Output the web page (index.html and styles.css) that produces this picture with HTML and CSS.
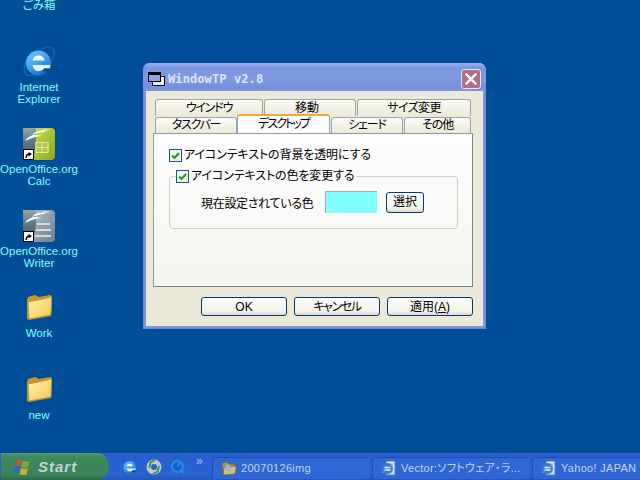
FILE: index.html
```html
<!DOCTYPE html>
<html lang="ja">
<head>
<meta charset="utf-8">
<title>WindowTP v2.8</title>
<link rel="stylesheet" href="styles.css">
</head>
<body>
<svg class="defs" width="0" height="0" aria-hidden="true">
  <defs>
    <linearGradient id="ieg" x1="0" y1="0" x2="0.600" y2="1"><stop offset="0" stop-color="#74c8f6"/><stop offset="0.600" stop-color="#3ca0ec"/><stop offset="1" stop-color="#1468c8"/></linearGradient>
    <linearGradient id="fold" x1="0" y1="0" x2="1" y2="1"><stop offset="0" stop-color="#fff4b0"/><stop offset="1" stop-color="#f0c850"/></linearGradient>
    <linearGradient id="calcg" x1="0" y1="0" x2="1" y2="1"><stop offset="0" stop-color="#c8dc50"/><stop offset="1" stop-color="#90a818"/></linearGradient>
    <linearGradient id="writeg" x1="0" y1="0" x2="1" y2="1"><stop offset="0" stop-color="#aebcc4"/><stop offset="1" stop-color="#6c8090"/></linearGradient>
    <linearGradient id="slate" x1="0" y1="0" x2="0" y2="1"><stop offset="0" stop-color="#98a4a4"/><stop offset="0.450" stop-color="#5c7884"/><stop offset="1" stop-color="#3c5c70"/></linearGradient>
    <symbol id="ie" viewBox="0 0 32 32">
      <path d="M4 13C1 20 0 27 4 29 9 31 19 26 25 20 31 14 33 6 30 2.500 27 0 22 1 18 3.500" fill="none" stroke="#1a64b0" stroke-width="1.300"/>
      <circle cx="15.500" cy="17" r="12.500" fill="url(#ieg)"/>
      <path d="M9.500 14.500C10 11 12.500 9.500 15.500 9.500S21 11 21.500 14.500z" fill="#f2fafe"/>
      <path d="M9.500 19H27.500L27 22.500H21C20 24 18 25 16 25 12.500 25 10 23 9.500 19z" fill="#e6f4fc"/>
      <path d="M21 22.500H28L25 27 20 25z" fill="#004e98"/>
    </symbol>
    <symbol id="iepage" viewBox="0 0 16 16">
      <path d="M5 1H14V15H5z" fill="#dfe6f4" stroke="#5878a8"/>
      <path d="M8 4h4M8 12h4" stroke="#8aa0c8"/>
      <circle cx="6.500" cy="8.500" r="5.500" fill="#2e7cdc"/>
      <path d="M3.500 7.500h6M3.500 10h6" stroke="#e8f2fc" stroke-width="1.400"/>
      <path d="M1 13 12 4" stroke="#c8a060" stroke-width="1"/>
    </symbol>
    <symbol id="openfolder" viewBox="0 0 16 16">
      <path d="M1 3 6 2 8 4 14 4V13L2 15z" fill="#a89458" stroke="#6c6038" stroke-width=".7"/>
      <path d="M3 7 15.500 6 14 14 2 15z" fill="#cfbd84" stroke="#6c6038" stroke-width=".7"/>
      <circle cx="7" cy="8" r="3" fill="#9cb4d4"/>
    </symbol>
    <symbol id="shortcut" viewBox="0 0 11 11">
      <rect width="11" height="11" fill="#000"/>
      <rect x="1" y="1" width="9" height="9" fill="#fff"/>
      <path d="M2.500 9C2.500 6 3.500 4.500 5.500 4.500V3L9 5 5.500 7.500V6C4.500 6 4 7 4 9z" fill="#000"/>
    </symbol>
    <symbol id="calc" viewBox="0 0 32 32">
      <path d="M0 0H26V32H0z" fill="url(#slate)"/>
      <path d="M13 0H29Q32 1 32 3V29Q32 31 29 32H9Q14 20 13 0z" fill="url(#calcg)"/>
      <path d="M12 14h14v11H12z" fill="#b4c84c"/>
      <path d="M13 14.500h12v10H13zM19 14.500v10M13 19.500h12" fill="none" stroke="#dce69c"/>
      <path d="M2 13C6 7 12 6 19 8 13 8 8 10 2 13zM9 7C13 2 19 2 23 4 18 4 14 5 9 7zM17 3.500C20 1 24 1 28 2 24 2 21 3 17 3.500z" fill="#fff"/>
      <use href="#shortcut" x="0" y="21" width="11" height="11"/>
    </symbol>
    <symbol id="writer" viewBox="0 0 32 32">
      <path d="M0 0H26V32H0z" fill="url(#slate)"/>
      <path d="M13 0H29Q32 1 32 3V29Q32 31 29 32H9Q14 20 13 0z" fill="url(#writeg)"/>
      <path d="M14 14h13M13 20h15M12 26h16" stroke="#d4dce0" stroke-width="2" fill="none"/>
      <path d="M2 13C6 7 12 6 19 8 13 8 8 10 2 13zM9 7C13 2 19 2 23 4 18 4 14 5 9 7zM17 3.500C20 1 24 1 28 2 24 2 21 3 17 3.500z" fill="#fff"/>
      <use href="#shortcut" x="0" y="21" width="11" height="11"/>
    </symbol>
    <symbol id="folder" viewBox="0 0 32 32">
      <path d="M4 8 5 5 12 3 16 5 27 3 29 4 28 24 6 28 4 27z" fill="#c89828"/>
      <path d="M5 10 15 8 28.500 5 28 23 6 27z" fill="url(#fold)" stroke="#b88c28" stroke-width=".8"/>
    </symbol>
  </defs>
</svg>

<main class="desktop">
  <ul class="icons">
    <li class="icon">
      <span class="icon-pic"></span>
      <span class="icon-label">ごみ箱</span>
    </li>
    <li class="icon">
      <svg class="icon-pic"><use href="#ie"/></svg>
      <span class="icon-label">Internet<br>Explorer</span>
    </li>
    <li class="icon">
      <svg class="icon-pic"><use href="#calc"/></svg>
      <span class="icon-label">OpenOffice.org<br>Calc</span>
    </li>
    <li class="icon">
      <svg class="icon-pic"><use href="#writer"/></svg>
      <span class="icon-label">OpenOffice.org<br>Writer</span>
    </li>
    <li class="icon">
      <svg class="icon-pic"><use href="#folder"/></svg>
      <span class="icon-label">Work</span>
    </li>
    <li class="icon">
      <svg class="icon-pic"><use href="#folder"/></svg>
      <span class="icon-label">new</span>
    </li>
  </ul>

  <section class="window">
    <header class="titlebar">
      <svg class="title-icon" width="17" height="14" viewBox="0 0 17 14">
        <rect x="4.500" y="4.500" width="12" height="9" fill="#e8ecf8" stroke="#000"/>
        <rect x="0.500" y="0.500" width="12" height="9" fill="#8ba4e4" stroke="#000"/>
        <rect x="1" y="1" width="11" height="2" fill="#000"/>
      </svg>
      <span class="title-text">WindowTP v2.8</span>
      <span class="close">
        <svg width="12" height="12" viewBox="0 0 12 12"><path d="M1.500 1.500 10.500 10.500M10.500 1.500 1.500 10.500" stroke="#fff" stroke-width="2.400" stroke-linecap="square"/></svg>
      </span>
    </header>
    <div class="body">
      <div class="tabs">
        <div class="tabrow">
          <span class="tab t1">ウインドウ</span>
          <span class="tab t2">移動</span>
          <span class="tab t3">サイズ変更</span>
        </div>
        <div class="tabrow lower">
          <span class="tab t4">タスクバー</span>
          <span class="tab t5 active">デスクトップ</span>
          <span class="tab t6">シェード</span>
          <span class="tab t7">その他</span>
        </div>
      </div>
      <div class="panel">
        <label class="check">
          <svg class="box" viewBox="0 0 13 13"><rect x=".5" y=".5" width="12" height="12" fill="#f4f4ee" stroke="#1c5180"/><path d="M3 6.500 5.500 9 10 4" fill="none" stroke="#21a121" stroke-width="2.200"/></svg>
          <span class="check-text">アイコンテキストの背景を透明にする</span>
        </label>
        <fieldset class="group">
          <legend class="check legend">
            <svg class="box" viewBox="0 0 13 13"><rect x=".5" y=".5" width="12" height="12" fill="#f4f4ee" stroke="#1c5180"/><path d="M3 6.500 5.500 9 10 4" fill="none" stroke="#21a121" stroke-width="2.200"/></svg>
            <span class="check-text">アイコンテキストの色を変更する</span>
          </legend>
          <div class="color-row">
            <span class="color-label">現在設定されている色</span>
            <span class="swatch"></span>
            <button class="btn pick" type="button">選択</button>
          </div>
        </fieldset>
      </div>
      <div class="actions">
        <button class="btn wide" type="button">OK</button>
        <button class="btn wide cancel" type="button">キャンセル</button>
        <button class="btn wide" type="button">適用(<u>A</u>)</button>
      </div>
    </div>
  </section>

  <footer class="taskbar">
    <div class="start">
      <svg class="logo" width="19" height="18" viewBox="0 0 19 18">
        <path d="M4 3C6 1 8 1 10 2L8 8C6 7 4 7 2 8z" fill="#c4553a"/>
        <path d="M11 2.500C13 4 16 4 18 3L16 9C14 10 11 10 9 8.500z" fill="#80a838"/>
        <path d="M2 9C4 8 6 8 8 9L6.500 15C4.500 14 2.500 14 0.500 15z" fill="#2c68cc"/>
        <path d="M9 10C11 11 14 11 16 10L14.500 16.500C12.500 17.500 9.500 17 7.500 16z" fill="#c8ac38"/>
      </svg>
      <span class="start-text">Start</span>
    </div>
    <div class="quick">
      <svg class="ql" width="16" height="16"><use href="#ie"/></svg>
      <svg class="ql" width="16" height="16" viewBox="0 0 16 16">
        <circle cx="8" cy="8" r="7.500" fill="#c4ccc8"/>
        <circle cx="8" cy="8" r="3" fill="#2a62c8"/>
        <path d="M3 9 4.500 3.500 9 1M13 7 11.500 12.500 7 15" stroke="#3a9a48" stroke-width="2" fill="none"/>
      </svg>
      <svg class="ql" width="16" height="16" viewBox="0 0 16 16">
        <circle cx="7.500" cy="7.500" r="5.500" fill="#1f58c8" stroke="#1c8ce0" stroke-width="2.400"/>
        <path d="M7.500 7.500 10 3M10 10 14 14" stroke="#1c8ce0" stroke-width="2"/>
      </svg>
      <span class="more">»</span>
    </div>
    <div class="tasks">
      <div class="task">
        <svg class="task-icon" width="16" height="16"><use href="#openfolder"/></svg>
        <span class="task-text">20070126img</span>
      </div>
      <div class="task">
        <svg class="task-icon" width="16" height="16"><use href="#iepage"/></svg>
        <span class="task-text">Vector:ソフトウェア・ラ...</span>
      </div>
      <div class="task">
        <svg class="task-icon" width="16" height="16"><use href="#iepage"/></svg>
        <span class="task-text">Yahoo! JAPAN</span>
      </div>
    </div>
  </footer>
</main>
</body>
</html>
```

FILE: styles.css
```css
* { box-sizing: border-box; }

html, body {
  margin: 0;
  padding: 0;
}

body {
  width: 640px;
  height: 480px;
  overflow: hidden;
  font-family: "Liberation Sans", "Noto Sans CJK JP", sans-serif;
  font-size: 12px;
  font-feature-settings: "palt";
  color: #000;
}

.defs { position: absolute; }

.desktop {
  position: relative;
  width: 640px;
  height: 480px;
  overflow: hidden;
  background: #004e98;
  display: flex;
  flex-direction: column;
  justify-content: flex-end;
}

/* Desktop icons */
.icons {
  position: absolute;
  left: 0;
  top: -36px;
  width: 78px;
  margin: 0;
  padding: 0;
  list-style: none;
  display: flex;
  flex-direction: column;
}

.icon {
  height: 82px;
  display: flex;
  flex-direction: column;
  align-items: center;
}

.icon-pic {
  display: block;
  width: 32px;
  height: 32px;
  flex: none;
}

.icon-label {
  margin-top: 3px;
  color: #7fffff;
  font-size: 11.500px;
  line-height: 12px;
  text-align: center;
  white-space: nowrap;
}

/* Window */
.window {
  position: absolute;
  left: 143px;
  top: 63px;
  width: 343px;
  height: 266px;
  display: flex;
  flex-direction: column;
  background: #7d95dd;
  border-radius: 7px 7px 0 0;
  padding: 0 3px 3px;
  box-shadow: inset 0 0 0 1px #6f88d4;
}

.titlebar {
  height: 28px;
  flex: none;
  display: flex;
  align-items: center;
  margin: 0 -3px;
  padding: 3px 5px 0 5px;
  border-radius: 7px 7px 0 0;
  background: linear-gradient(#9db0ea 0, #7a94df 5px, #7f99e2 16px, #7690db 24px, #7c96de 100%);
}

.title-icon { flex: none; }

.title-text {
  margin-left: 3px;
  font-family: "DejaVu Sans Mono", monospace;
  font-weight: bold;
  font-size: 12px;
  letter-spacing: 0.1px;
  color: #dde6fa;
  flex: 1;
}

.close {
  width: 20px;
  height: 20px;
  display: flex;
  align-items: center;
  justify-content: center;
  background: #b0707f;
  border: 1px solid #dfe4f6;
  border-radius: 3px;
}

.body {
  flex: 1;
  display: flex;
  flex-direction: column;
  background: #ece9d8;
  padding: 8px 10px 9px 7px;
}

/* Tabs */
.tabs { flex: none; }

.tabrow {
  display: flex;
  height: 17px;
}

.tabrow.lower { align-items: flex-end; }

.tab {
  height: 17px;
  display: flex;
  align-items: center;
  justify-content: center;
  margin-left: 2px;
  background: linear-gradient(#fbfbf7, #ece9d8);
  border: 1px solid #91a7b4;
  border-bottom: 0;
  border-radius: 3px 3px 0 0;
  line-height: 15px;
  white-space: nowrap;
}

.t1 { width: 108px; margin-left: 2px; letter-spacing: -1.200px; }
.t2 { width: 92px; margin-left: 1px; padding-right: 6px; }
.t3 { width: 114px; margin-left: 1px; letter-spacing: -0.600px; }
.t4 { width: 82px; height: 16px; margin-left: 2px; letter-spacing: -1.200px; }
.t5 { width: 93px; margin-left: 0; letter-spacing: -2px; }
.t6 { width: 72px; height: 16px; margin-left: 1px; letter-spacing: -1.200px; }
.t7 { width: 67px; height: 16px; margin-left: 1px; letter-spacing: -1px; }

.tab.active {
  height: 19px;
  margin-top: -3px;
  background: #fcfcfe;
  border-top: 2px solid #f0a838;
  border-bottom: 0;
  z-index: 1;
}

/* Panel */
.panel {
  flex: none;
  width: 320px;
  height: 154px;
  background: linear-gradient(#fdfdff, #f5f5f0);
  border: 1px solid #919b9c;
  border-right-color: #7a8488;
  border-bottom-color: #7a8488;
  padding: 15px 15px 0;
}

.check {
  display: flex;
  align-items: center;
  gap: 2px;
  height: 13px;
  line-height: 13px;
  white-space: nowrap;
}

.check-text { letter-spacing: -0.120px; }

.box {
  width: 13px;
  height: 13px;
  flex: none;
}

.group {
  width: 289px;
  height: 59px;
  margin: 8px 0 0;
  padding: 0;
  border: 1px solid #d0d0bf;
  border-radius: 4px;
  min-width: 0;
}

.legend {
  margin-left: 6px;
  padding: 0 2px 0 0;
}

.color-row {
  display: flex;
  align-items: center;
  height: 22px;
  margin-top: 8px;
  padding-left: 31px;
}

.color-label {
  width: 124px;
  letter-spacing: -0.300px;
  white-space: nowrap;
}

.swatch {
  width: 52px;
  height: 22px;
  background: #7fffff;
  border-top: 1px solid #a8a8a0;
  border-left: 1px solid #a8a8a0;
}

/* Buttons */
.btn {
  font-family: inherit;
  font-size: 12px;
  font-feature-settings: inherit;
  color: #000;
  padding: 0;
  background: linear-gradient(#fdfdfb, #f3f2ea 80%, #dcd8c8);
  border: 1px solid #003c74;
  border-radius: 3px;
  line-height: 14px;
}

.cancel { letter-spacing: -1.400px; }

.pick {
  width: 38px;
  height: 21px;
  margin-left: 9px;
}

.actions {
  display: flex;
  justify-content: flex-end;
  gap: 7px;
  margin-top: 10px;
}

.wide {
  width: 86px;
  height: 19px;
}

/* Taskbar */
.taskbar {
  height: 27px;
  flex: none;
  display: flex;
  align-items: stretch;
  background: linear-gradient(#2c60cc, #265fd0 3px, #2a62d2 20px, #2356bb);
  position: relative;
}

.start {
  width: 108px;
  flex: none;
  display: flex;
  align-items: center;
  padding: 0 0 0 11px;
  margin-left: 1px;
  gap: 7px;
  background: linear-gradient(#5a9a70, #3e8a5c 4px, #3a8258 22px, #2c6c48);
  border-radius: 0 12px 12px 0 / 0 14px 14px 0;
}

.logo { flex: none; }

.start-text {
  font-family: "Liberation Sans", sans-serif;
  font-style: italic;
  font-weight: bold;
  font-size: 15px;
  letter-spacing: 1px;
  color: #c3d3da;
}

.quick {
  width: 103px;
  flex: none;
  display: flex;
  align-items: center;
  gap: 8px;
  padding-left: 13px;
}

.ql { flex: none; }

.more {
  margin: -11px 0 0 2px;
  font-size: 12px;
  line-height: 12px;
  color: #a8c0ec;
}

.tasks {
  flex: 1;
  display: flex;
  gap: 3px;
  padding: 4px 0 1px;
  min-width: 0;
  overflow: hidden;
}

.task {
  width: 157px;
  flex: none;
  display: flex;
  align-items: center;
  gap: 4px;
  padding-left: 9px;
  background: #2e66d6;
  border-radius: 2px;
  box-shadow: inset 1px 1px 0 #1f4fa8;
  white-space: nowrap;
  overflow: hidden;
}

.task-icon { flex: none; }

.task-text {
  color: #c4d4f2;
  font-size: 11px;
  letter-spacing: 0.300px;
  line-height: 14px;
}
```
